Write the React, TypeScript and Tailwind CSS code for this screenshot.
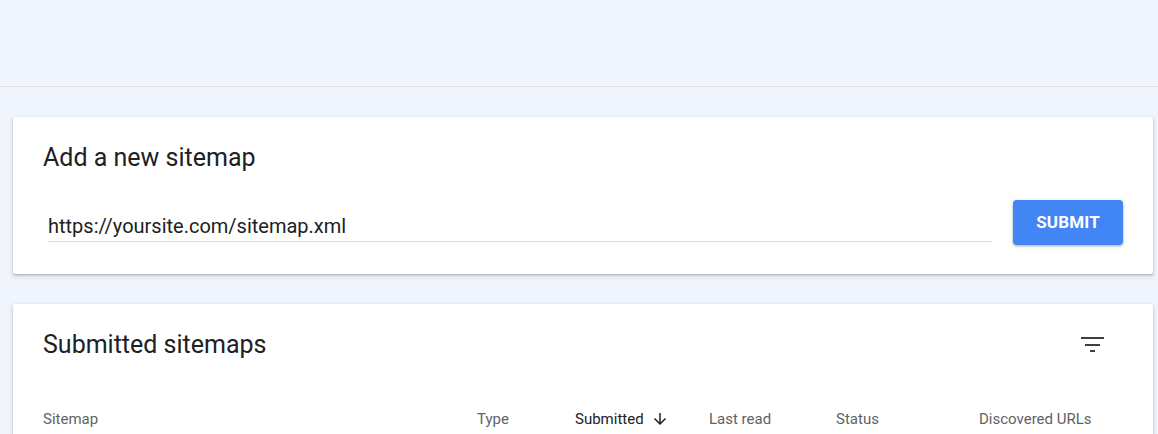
const columns = [
  { label: 'Sitemap', width: 'w-[434px]' },
  { label: 'Type', width: 'w-[98px]' },
  { label: 'Submitted', width: 'w-[134px]', active: true },
  { label: 'Last read', width: 'w-[127px]' },
  { label: 'Status', width: 'w-[143px]' },
  { label: 'Discovered URLs', width: 'flex-1' },
];

function FilterIcon() {
  return (
    <svg width="24" height="16" viewBox="0 0 24 16" className="text-[#3c4043]">
      <rect x="0" y="0" width="23" height="2" fill="currentColor" />
      <rect x="4" y="7" width="15" height="2" fill="currentColor" />
      <rect x="9" y="13" width="5" height="2" fill="currentColor" />
    </svg>
  );
}

function SortArrow() {
  return (
    <svg width="18" height="18" viewBox="0 0 24 24" className="text-[#202124]">
      <path fill="currentColor" d="M20 12l-1.41-1.41L13 16.17V4h-2v12.17l-5.58-5.59L4 12l8 8 8-8z" />
    </svg>
  );
}

export default function App() {
  return (
    <div className="min-h-screen bg-[#f0f4fc] font-['Roboto','Liberation_Sans',sans-serif] text-[#202124]">
      <div className="h-[87px] border-b border-[#dfe1e5]" />

      <main className="flex flex-col gap-[30px] pl-[13px] pr-[5px] pt-[30px]">
        <section className="rounded-[2px] bg-white pb-[29px] pl-[30px] pr-[30px] pt-[25px] shadow-[0_1px_2px_rgba(60,64,67,0.3),0_2px_4px_1px_rgba(60,64,67,0.12)]">
          <h2 className="text-[25px] leading-[32px] font-normal">Add a new sitemap</h2>
          <div className="mt-[26px] flex items-start gap-[21px]">
            <div className="ml-[5px] flex-1 border-b border-[#dadce0] pb-[1px] pt-[14px]">
              <input
                readOnly
                value="https://yoursite.com/sitemap.xml"
                className="w-full bg-transparent text-[20px] leading-[24px] text-[#202124] outline-none"
              />
            </div>
            <button className="h-[45px] w-[110px] rounded-[4px] bg-[#4285f4] text-[17px] font-bold tracking-[0.01em] text-white shadow-[0_1px_2px_rgba(60,64,67,0.3),0_1px_3px_1px_rgba(60,64,67,0.15)]">
              SUBMIT
            </button>
          </div>
        </section>

        <section className="min-h-[200px] rounded-[2px] bg-white pl-[30px] pr-[30px] pt-[25px] shadow-[0_1px_2px_rgba(60,64,67,0.3),0_2px_4px_1px_rgba(60,64,67,0.12)]">
          <div className="flex items-start justify-between">
            <h2 className="text-[25px] leading-[32px] font-normal">Submitted sitemaps</h2>
            <button className="mr-[18px] mt-[4px] flex h-[24px] w-[24px] items-start justify-center pt-[4px]">
              <FilterIcon />
            </button>
          </div>
          <div className="mt-[48px] flex text-[15px] leading-[20px] text-[#5f6368]">
            {columns.map((c) => (
              <div key={c.label} className={`${c.width} flex items-center gap-[7px]`}>
                <span className={c.active ? 'text-[#202124]' : ''}>{c.label}</span>
                {c.active && <SortArrow />}
              </div>
            ))}
          </div>
        </section>
      </main>
    </div>
  );
}
